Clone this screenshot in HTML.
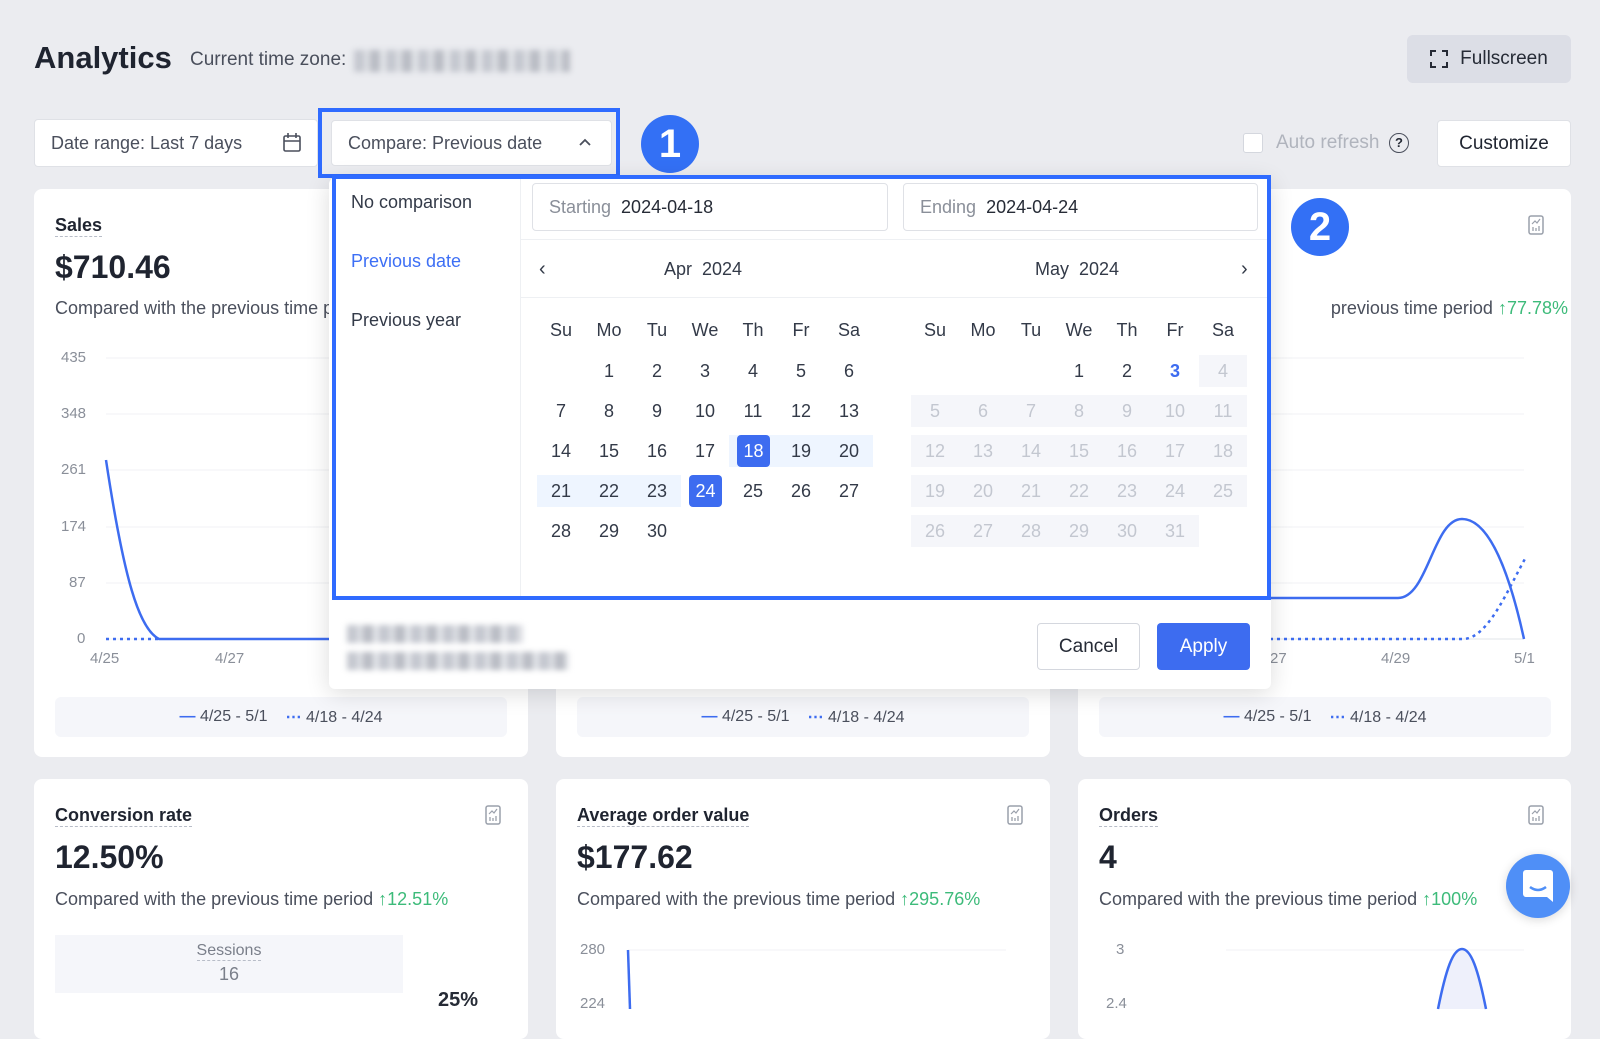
<!DOCTYPE html>
<html><head><meta charset="utf-8"><style>
*{box-sizing:border-box;margin:0;padding:0}
body{width:1600px;height:1005px;overflow:hidden;background:#ebecf0;font-family:"Liberation Sans",Arial,sans-serif;color:#262b36;position:relative}
.a{position:absolute}
.card{position:absolute;background:#fff;border-radius:8px}
.t{font-size:18px;font-weight:bold;color:#1f2430;border-bottom:1.5px dashed #b8bdc8;line-height:22px}
.v{font-size:32px;font-weight:bold;color:#1f2430}
.cmp{font-size:18px;color:#4a4f5c}
.up{color:#3dbb7a}
.blur{background:repeating-linear-gradient(90deg,#c4c7cf 0 10px,#dcdee3 10px 16px,#b9bcc4 16px 26px,#e4e6ea 26px 32px);filter:blur(3px)}
.lg{position:absolute;background:#f5f6fa;border-radius:6px;height:40px;font-size:16px;color:#4a4f5c;display:flex;align-items:center;justify-content:center;gap:18px}
.ax{font-size:15px;color:#8a8f99}
.grid{position:absolute;display:grid;grid-template-columns:repeat(7,48px);grid-auto-rows:40px;font-size:18px;color:#333a48}
.grid span{display:flex;align-items:center;justify-content:center;position:relative}
.d{color:#c3c7d0;background:#f5f6fa}
.ic{position:absolute;width:16px;height:20px}
</style></head><body>
<svg width="0" height="0" style="position:absolute"><defs><symbol id="ci" viewBox="0 0 16 20"><rect x="1" y="1" width="14" height="18" rx="2" fill="none" stroke="#9aa0ab" stroke-width="1.5"/><path d="M4 9l3-3 2 2 3-4" fill="none" stroke="#9aa0ab" stroke-width="1.2"/><path d="M5 16v-4M8 16v-3M11 16v-5" stroke="#9aa0ab" stroke-width="1.3"/></symbol></defs></svg>

<div class="a" style="left:34px;top:40px;font-size:31px;font-weight:bold;color:#1f2430">Analytics</div>
<div class="a" style="left:190px;top:49px;font-size:19px;color:#4a4f5c">Current time zone:</div>
<div class="a blur" style="left:354px;top:50px;width:216px;height:22px"></div>
<div class="a" style="left:1407px;top:35px;width:164px;height:48px;background:#dcdee6;border-radius:6px;font-size:19px;color:#262b36;display:flex;align-items:center;justify-content:center;gap:12px">
<svg width="18" height="18" viewBox="0 0 18 18" fill="none" stroke="#262b36" stroke-width="2"><path d="M1 6V1h5M12 1h5v5M17 12v5h-5M6 17H1v-5"/></svg>Fullscreen</div>

<div class="a" style="left:34px;top:119px;width:284px;height:48px;background:#fff;border:1px solid #dfe1e6;border-radius:4px;font-size:18px;color:#4a4f5c;padding:13px 16px">Date range: Last 7 days
<svg class="a" style="right:16px;top:13px" width="18" height="19" viewBox="0 0 18 19" fill="none" stroke="#4a4f5c" stroke-width="1.6"><rect x="1" y="3" width="16" height="15" rx="1.5"/><path d="M1 8h16M5 0v5M13 0v5"/></svg></div>
<div class="a" style="left:331px;top:120px;width:281px;height:46px;background:#fff;border:1px solid #dfe1e6;border-radius:4px;font-size:18px;color:#4a4f5c;padding:12px 16px">Compare: Previous date<svg class="a" style="right:20px;top:17px" width="12" height="8" viewBox="0 0 12 8" fill="none" stroke="#4a4f5c" stroke-width="1.8"><path d="M1 7l5-5 5 5"/></svg></div>
<div class="a" style="left:318px;top:108px;width:302px;height:70px;border:4px solid #2f6bff"></div>
<div class="a" style="left:641px;top:115px;width:58px;height:58px;border-radius:50%;background:#3370f5;color:#fff;font-size:40px;font-weight:bold;display:flex;align-items:center;justify-content:center">1</div>

<div class="a" style="left:1243px;top:133px;width:20px;height:20px;border:1.5px solid #d4d7de;border-radius:3px;background:#fff"></div>
<div class="a" style="left:1276px;top:132px;font-size:19px;color:#b0b4bd">Auto refresh</div>
<div class="a" style="left:1389px;top:133px;width:20px;height:20px;border:1.6px solid #4a4f5c;border-radius:50%;font-size:13px;text-align:center;line-height:17px;font-weight:bold">?</div>
<div class="a" style="left:1437px;top:120px;width:134px;height:47px;background:#fff;border:1px solid #dfe1e6;border-radius:4px;font-size:19px;display:flex;align-items:center;justify-content:center;color:#1f2430">Customize</div>

<div class="card" style="left:34px;top:189px;width:494px;height:568px">
 <div class="a t" style="left:21px;top:25px">Sales</div>
 <div class="a v" style="left:21px;top:60px">$710.46</div>
 <div class="a cmp" style="left:21px;top:109px">Compared with the previous time period</div>
 <div class="a ax" style="left:27px;top:160px">435</div><div class="a ax" style="left:27px;top:216px">348</div><div class="a ax" style="left:27px;top:272px">261</div><div class="a ax" style="left:27px;top:329px">174</div><div class="a ax" style="left:35px;top:385px">87</div><div class="a ax" style="left:43px;top:441px">0</div>
 <div class="a ax" style="left:56px;top:461px">4/25</div><div class="a ax" style="left:181px;top:461px">4/27</div>
 <svg class="a" style="left:0;top:0" width="494" height="500"><g stroke="#f0f1f4"><path d="M72 169H470M72 225H470M72 281H470M72 338H470M72 394H470M72 450H470"/></g><path d="M72 271C90 390 105 440 125 450H470" stroke="#3d6cf0" stroke-width="2.5" fill="none"/><path d="M72 450H125" stroke="#3d6cf0" stroke-width="2.5" stroke-dasharray="3 4"/></svg>
 <div class="lg" style="left:21px;top:508px;width:452px"><span><b style="color:#3d6cf0">&#8212;</b> 4/25 - 5/1</span><span><b style="color:#3d6cf0">&#8943;</b> 4/18 - 4/24</span></div>
</div>
<div class="card" style="left:556px;top:189px;width:494px;height:568px">
 <div class="lg" style="left:21px;top:508px;width:452px"><span><b style="color:#3d6cf0">&#8212;</b> 4/25 - 5/1</span><span><b style="color:#3d6cf0">&#8943;</b> 4/18 - 4/24</span></div>
</div>
<div class="card" style="left:1078px;top:189px;width:493px;height:568px">
 <svg class="ic" style="left:450px;top:26px"><use href="#ci"/></svg>
 <div class="a cmp" style="left:100px;top:109px;width:390px;text-align:right">previous time period <span class="up">&#8593;77.78%</span></div>
 <svg class="a" style="left:0;top:0" width="493" height="500"><g stroke="#f0f1f4"><path d="M150 169H446M150 225H446M150 281H446M150 338H446M150 394H446"/></g><path d="M150 450H446" stroke="#e2e4ea"/><path d="M150 409H320C350 409 355 330 384 330C415 330 435 400 446 450" stroke="#3d6cf0" stroke-width="2.5" fill="none"/><path d="M150 450H385C410 450 430 400 448 368" stroke="#3d6cf0" stroke-width="2.5" stroke-dasharray="3 4" fill="none"/></svg>
 <div class="a ax" style="left:192px;top:461px">27</div><div class="a ax" style="left:303px;top:461px">4/29</div><div class="a ax" style="left:436px;top:461px">5/1</div>
 <div class="lg" style="left:21px;top:508px;width:452px"><span><b style="color:#3d6cf0">&#8212;</b> 4/25 - 5/1</span><span><b style="color:#3d6cf0">&#8943;</b> 4/18 - 4/24</span></div>
</div>

<div class="card" style="left:34px;top:779px;width:494px;height:260px">
 <div class="a t" style="left:21px;top:25px">Conversion rate</div>
 <svg class="ic" style="left:451px;top:26px"><use href="#ci"/></svg>
 <div class="a v" style="left:21px;top:60px">12.50%</div>
 <div class="a cmp" style="left:21px;top:110px">Compared with the previous time period <span class="up">&#8593;12.51%</span></div>
 <div class="a" style="left:21px;top:156px;width:348px;height:58px;background:#f5f6fa;text-align:center;color:#7a7f8a"><div style="font-size:16px;margin-top:7px;display:inline-block;border-bottom:1.5px dashed #b8bdc8">Sessions</div><div style="font-size:18px;margin-top:3px">16</div></div>
 <div class="a" style="left:404px;top:210px;font-size:20px;font-weight:bold">25%</div>
</div>
<div class="card" style="left:556px;top:779px;width:494px;height:260px">
 <div class="a t" style="left:21px;top:25px">Average order value</div>
 <svg class="ic" style="left:451px;top:26px"><use href="#ci"/></svg>
 <div class="a v" style="left:21px;top:60px">$177.62</div>
 <div class="a cmp" style="left:21px;top:110px">Compared with the previous time period <span class="up">&#8593;295.76%</span></div>
 <div class="a ax" style="left:24px;top:162px">280</div><div class="a ax" style="left:24px;top:216px">224</div>
 <svg class="a" style="left:0;top:0" width="494" height="260"><path d="M72 171H450" stroke="#f0f1f4"/><path d="M72 171L74 230" stroke="#3d6cf0" stroke-width="2.5"/></svg>
</div>
<div class="card" style="left:1078px;top:779px;width:493px;height:260px">
 <div class="a t" style="left:21px;top:25px">Orders</div>
 <svg class="ic" style="left:450px;top:26px"><use href="#ci"/></svg>
 <div class="a v" style="left:21px;top:60px">4</div>
 <div class="a cmp" style="left:21px;top:110px">Compared with the previous time period <span class="up">&#8593;100%</span></div>
 <div class="a ax" style="left:38px;top:162px">3</div><div class="a ax" style="left:28px;top:216px">2.4</div>
 <svg class="a" style="left:0;top:0" width="493" height="260"><path d="M148 171H446" stroke="#f0f1f4"/><path d="M360 230C368 190 375 170 384 170C393 170 400 190 408 230Z" fill="#eef0fb"/><path d="M360 230C368 190 375 170 384 170C393 170 400 190 408 230" stroke="#3d6cf0" stroke-width="2.5" fill="none"/></svg>
</div>
<div class="a" style="left:1506px;top:854px;width:64px;height:64px;border-radius:50%;background:#4f8ff7;box-shadow:0 2px 10px rgba(0,0,0,.15)">
 <svg class="a" style="left:17px;top:16px" width="30" height="32" viewBox="0 0 30 32"><path d="M3 0h24a3 3 0 0 1 3 3v29l-6-5H3a3 3 0 0 1-3-3V3a3 3 0 0 1 3-3z" fill="#fff"/><path d="M7 17q8 6 16 0" stroke="#4f8ff7" stroke-width="2.5" fill="none"/></svg></div>

<div class="a" style="left:329px;top:178px;width:942px;height:511px;background:#fff;border-radius:6px;box-shadow:0 4px 24px rgba(0,0,0,.14)">
 <div class="a" style="left:191px;top:0;width:1px;height:420px;background:#eef0f3"></div>
 <div class="a" style="left:22px;top:14px;font-size:18px;color:#333a48">No comparison</div>
 <div class="a" style="left:22px;top:73px;font-size:18px;color:#3d6ff5">Previous date</div>
 <div class="a" style="left:22px;top:132px;font-size:18px;color:#333a48">Previous year</div>
 <div class="a" style="left:203px;top:5px;width:356px;height:48px;border:1px solid #dfe1e6;border-radius:4px;font-size:18px;padding:13px 16px;color:#8a8f99">Starting&nbsp;&nbsp;<span style="color:#262b36">2024-04-18</span></div>
 <div class="a" style="left:574px;top:5px;width:355px;height:48px;border:1px solid #dfe1e6;border-radius:4px;font-size:18px;padding:13px 16px;color:#8a8f99">Ending&nbsp;&nbsp;<span style="color:#262b36">2024-04-24</span></div>
 <div class="a" style="left:192px;top:61px;width:750px;height:1px;background:#eef0f3"></div>
 <div class="a" style="left:192px;top:119px;width:750px;height:1px;background:#eef0f3"></div>
 <div class="a" style="left:210px;top:80px;font-size:20px;color:#333a48">&#8249;</div>
 <div class="a" style="left:912px;top:80px;font-size:20px;color:#333a48">&#8250;</div>
 <div class="a" style="left:335px;top:81px;font-size:18px;color:#333a48">Apr&nbsp; 2024</div>
 <div class="a" style="left:706px;top:81px;font-size:18px;color:#333a48">May&nbsp; 2024</div>
</div>
<div class="grid" style="left:537px;top:310px"><span>Su</span><span>Mo</span><span>Tu</span><span>We</span><span>Th</span><span>Fr</span><span>Sa</span></div>
<div class="grid" style="left:911px;top:310px"><span>Su</span><span>Mo</span><span>Tu</span><span>We</span><span>Th</span><span>Fr</span><span>Sa</span></div>
<div class="grid" style="left:537px;top:351px">
<span></span><span>1</span><span>2</span><span>3</span><span>4</span><span>5</span><span>6</span>
<span>7</span><span>8</span><span>9</span><span>10</span><span>11</span><span>12</span><span>13</span>
<span>14</span><span>15</span><span>16</span><span>17</span><span style="background:linear-gradient(#fff 0 4px,#eef5ff 4px 36px,#fff 36px)"><b class="a" style="left:8px;top:4px;width:33px;height:32px;background:#3d6cf0;border-radius:4px;color:#fff;font-weight:normal;display:flex;align-items:center;justify-content:center">18</b></span><span style="background:linear-gradient(#fff 0 4px,#eef5ff 4px 36px,#fff 36px)">19</span><span style="background:linear-gradient(#fff 0 4px,#eef5ff 4px 36px,#fff 36px)">20</span>
<span style="background:linear-gradient(#fff 0 4px,#eef5ff 4px 36px,#fff 36px)">21</span><span style="background:linear-gradient(#fff 0 4px,#eef5ff 4px 36px,#fff 36px)">22</span><span style="background:linear-gradient(#fff 0 4px,#eef5ff 4px 36px,#fff 36px)">23</span><span><b class="a" style="left:8px;top:4px;width:33px;height:32px;background:#3d6cf0;border-radius:4px;color:#fff;font-weight:normal;display:flex;align-items:center;justify-content:center">24</b></span><span>25</span><span>26</span><span>27</span>
<span>28</span><span>29</span><span>30</span>
</div>
<div class="grid" style="left:911px;top:351px">
<span></span><span></span><span></span><span>1</span><span>2</span><span style="color:#3d6cf0;font-weight:bold">3</span><span class="d" style="margin:4px 0">4</span>
<span class="d" style="margin:4px 0">5</span><span class="d" style="margin:4px 0">6</span><span class="d" style="margin:4px 0">7</span><span class="d" style="margin:4px 0">8</span><span class="d" style="margin:4px 0">9</span><span class="d" style="margin:4px 0">10</span><span class="d" style="margin:4px 0">11</span>
<span class="d" style="margin:4px 0">12</span><span class="d" style="margin:4px 0">13</span><span class="d" style="margin:4px 0">14</span><span class="d" style="margin:4px 0">15</span><span class="d" style="margin:4px 0">16</span><span class="d" style="margin:4px 0">17</span><span class="d" style="margin:4px 0">18</span>
<span class="d" style="margin:4px 0">19</span><span class="d" style="margin:4px 0">20</span><span class="d" style="margin:4px 0">21</span><span class="d" style="margin:4px 0">22</span><span class="d" style="margin:4px 0">23</span><span class="d" style="margin:4px 0">24</span><span class="d" style="margin:4px 0">25</span>
<span class="d" style="margin:4px 0">26</span><span class="d" style="margin:4px 0">27</span><span class="d" style="margin:4px 0">28</span><span class="d" style="margin:4px 0">29</span><span class="d" style="margin:4px 0">30</span><span class="d" style="margin:4px 0">31</span>
</div>
<div class="a" style="left:332px;top:175px;width:939px;height:425px;border:4px solid #2f6bff"></div>
<div class="a" style="left:1291px;top:198px;width:58px;height:58px;border-radius:50%;background:#3370f5;color:#fff;font-size:40px;font-weight:bold;display:flex;align-items:center;justify-content:center">2</div>
<div class="a blur" style="left:347px;top:625px;width:176px;height:18px"></div>
<div class="a blur" style="left:347px;top:652px;width:222px;height:18px"></div>
<div class="a" style="left:1037px;top:623px;width:103px;height:47px;border:1px solid #d4d7de;border-radius:4px;background:#fff;font-size:19px;display:flex;align-items:center;justify-content:center;color:#262b36">Cancel</div>
<div class="a" style="left:1157px;top:623px;width:93px;height:47px;border-radius:4px;background:#3d6cf0;font-size:19px;display:flex;align-items:center;justify-content:center;color:#fff">Apply</div>
</body></html>
